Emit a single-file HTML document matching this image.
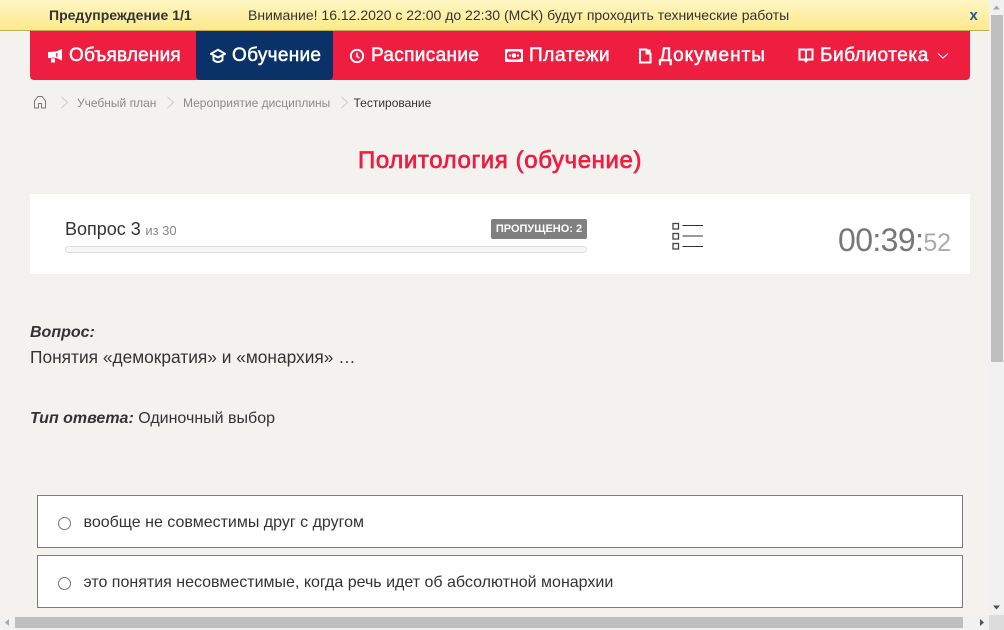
<!DOCTYPE html>
<html lang="ru"><head><meta charset="utf-8"><title>Тестирование</title>
<style>
html,body{margin:0;padding:0;width:1004px;height:630px;overflow:hidden;background:#f3f2ef;font-family:"Liberation Sans",sans-serif;color:#333}
.a{position:absolute;white-space:nowrap}
#bar{left:0;top:0;width:989px;height:30px;background:linear-gradient(#fff6c4,#fde98c);border-bottom:1px solid #c4ad50}
#nav{left:30px;top:31px;width:940px;height:49px;background:#ef1d40;border-radius:0 0 4px 4px}
#act{left:196px;top:31px;width:137px;height:49px;background:#0a3268;border-radius:0 0 4px 4px}
.n{top:43px;color:#fff;font-size:19px;line-height:26px;font-family:"Liberation Sans",sans-serif;-webkit-text-stroke:.5px #fff}
.i{position:absolute;top:47px;width:16px;height:16px}
.bc{top:96px;font-size:12px;line-height:14px;color:#8a8a8a}
.opt{left:37px;width:924px;height:51px;background:#fff;border:1px solid #7d7d7d}
.rad{position:absolute;left:58px;width:11px;height:11px;border:1px solid #767676;border-radius:50%;background:#fff}
.ot{left:83.500px;font-size:16px;line-height:20px;color:#333}
</style></head><body>
<div class="a" id="bar"></div>
<div class="a" style="left:49px;top:7px;font-size:14px;line-height:16px;font-weight:bold;color:#333">Предупреждение 1/1</div>
<div class="a" style="left:248px;top:7px;font-size:14px;line-height:16px;color:#333">Внимание! 16.12.2020 с 22:00 до 22:30 (МСК) будут проходить технические работы</div>
<div class="a" style="left:969.500px;top:8px;font-size:15px;line-height:16px;font-weight:bold;color:#1f5a94">x</div>

<div class="a" id="nav"></div><div class="a" id="act"></div>

<svg class="i" style="left:47px;top:48px" viewBox="0 0 16 16"><path d="M1 4 L9 3.500 L15 1 V12.500 L9.500 10 H8 V14.500 H4 V10 H1Z" fill="#fff"/><path d="M9.800 5 V8.800" stroke="#ef1d40" stroke-width="1.300" fill="none"/><path d="M4.500 10 H8" stroke="#ef1d40" stroke-width=".8" fill="none"/></svg>
<div class="a n" style="left:69px;letter-spacing:.2px">Объявления</div>

<svg class="i" style="left:210px;top:48px" viewBox="0 0 16 16"><path d="M8 1.800 L15 5.800 L8 9.500 L1 5.800Z" fill="none" stroke="#fff" stroke-width="2"/><path d="M3.500 8 V12 Q8 16 12.500 12 V8" fill="none" stroke="#fff" stroke-width="2"/></svg>
<div class="a n" style="left:232px;letter-spacing:.3px">Обучение</div>

<svg class="i" style="left:349px;top:48px" viewBox="0 0 16 16"><circle cx="8" cy="8" r="6.200" fill="none" stroke="#fff" stroke-width="1.900"/><path d="M8 4.500 V8.500 L10.500 10" fill="none" stroke="#fff" stroke-width="1.500"/></svg>
<div class="a n" style="left:371px;letter-spacing:.35px">Расписание</div>

<svg class="a" style="left:505px;top:49px" width="18" height="13" viewBox="0 0 18 13"><rect x="0" y="0" width="18" height="13" rx="1" fill="#fff"/><rect x="2" y="2.500" width="14" height="8" rx="2.500" fill="#ef1d40"/><circle cx="9" cy="6.500" r="2.300" fill="#fff"/><rect x="4" y="5.500" width="2" height="2" fill="#fff"/><rect x="12" y="5.500" width="2" height="2" fill="#fff"/></svg>
<div class="a n" style="left:529px;letter-spacing:.6px">Платежи</div>

<svg class="i" style="left:637px;top:48px" viewBox="0 0 16 16"><path d="M3 1.500 H9.500 L13.500 5.500 V14.500 H3Z" fill="none" stroke="#fff" stroke-width="2"/><path d="M8.500 1.500 V6.500 H13.500 V1.500Z" fill="#fff"/></svg>
<div class="a n" style="left:659px;letter-spacing:1px">Документы</div>

<svg class="i" style="left:798px;top:48px" viewBox="0 0 16 16"><path d="M1.500 1.500 H7 L8 2.500 L9 1.500 H14.500 V11.500 H9.500 L8 13.500 L6.500 11.500 H1.500Z M8 2.500 V13" fill="none" stroke="#fff" stroke-width="2"/></svg>
<div class="a n" style="left:820px;letter-spacing:.55px">Библиотека</div>
<svg class="a" style="left:937px;top:52px" width="12" height="8" viewBox="0 0 12 8"><path d="M1 1.500 L6 6 L11 1.500" fill="none" stroke="#fff" stroke-width="1.100"/></svg>

<svg class="a" style="left:33px;top:95px" width="14" height="14" viewBox="0 0 14 14"><path d="M1.500 6 L5 1.500 H9 L12.500 6 V13 H8.500 V8.500 H5.500 V13 H1.500Z" fill="none" stroke="#777" stroke-width="1"/></svg>
<svg class="a" style="left:60px;top:96px" width="9" height="13" viewBox="0 0 9 13"><path d="M1.500 1 L7.500 6.500 L1.500 12" fill="none" stroke="#ccc"/></svg>
<div class="a bc" style="left:77px">Учебный план</div>
<svg class="a" style="left:166px;top:96px" width="9" height="13" viewBox="0 0 9 13"><path d="M1.500 1 L7.500 6.500 L1.500 12" fill="none" stroke="#ccc"/></svg>
<div class="a bc" style="left:183px;letter-spacing:-.01px">Мероприятие дисциплины</div>
<svg class="a" style="left:340px;top:96px" width="9" height="13" viewBox="0 0 9 13"><path d="M1.500 1 L7.500 6.500 L1.500 12" fill="none" stroke="#ccc"/></svg>
<div class="a bc" style="left:353.500px;color:#333">Тестирование</div>

<div class="a" style="left:358px;top:146px;font-size:24px;line-height:30px;color:#ef1d40;letter-spacing:.6px;-webkit-text-stroke:.7px #ef1d40">Политология (обучение)</div>

<div class="a" style="left:30px;top:194px;width:940px;height:80px;background:#fff"></div>
<div class="a" style="left:65px;top:218px;font-size:18px;line-height:22px;color:#333">Вопрос 3 <span style="font-size:13px;color:#888;margin-left:-.5px">из 30</span></div>
<div class="a" style="left:65px;top:246px;width:520px;height:5px;border:1px solid #ddd;border-radius:4px;background:#f7f7f7"></div>
<div class="a" style="left:491px;top:219px;width:96px;height:20px;background:#808080;border-radius:2px;color:#fff;font-size:11px;font-weight:bold;line-height:20px;text-align:center">ПРОПУЩЕНО: 2</div>
<svg class="a" style="left:672px;top:222px" width="32" height="29" viewBox="0 0 32 29"><g fill="none" stroke="#444" stroke-width="1.300"><rect x="1" y="1.500" width="5.500" height="5.500"/><rect x="1" y="11.500" width="5.500" height="5.500"/><rect x="1" y="21.500" width="5.500" height="5.500"/></g><path d="M10.500 3.500H31M10.500 14H31M10.500 24.500H31" fill="none" stroke="#333" stroke-width="1"/></svg>
<div class="a" style="left:838px;top:221px;font-size:32px;line-height:38px;color:#777;letter-spacing:-.6px">00:39:<span style="font-size:25px;color:#aaa;letter-spacing:-.2px">52</span></div>

<div class="a" style="left:30px;top:323px;font-size:16px;line-height:20px;font-weight:bold;font-style:italic;color:#333">Вопрос:</div>
<div class="a" style="left:30px;top:347px;font-size:17.330px;line-height:20px;color:#333">Понятия «демократия» и «монархия» …</div>
<div class="a" style="left:30px;top:409px;font-size:16px;line-height:20px;color:#333"><b><i>Тип ответа:</i></b> Одиночный выбор</div>

<div class="a opt" style="top:495px"></div>
<div class="rad" style="top:517px"></div>
<div class="a ot" style="top:513px">вообще не совместимы друг с другом</div>
<div class="a opt" style="top:555px"></div>
<div class="rad" style="top:577px"></div>
<div class="a ot" style="top:573px">это понятия несовместимые, когда речь идет об абсолютной монархии</div>

<div class="a" style="left:989px;top:0;width:15px;height:615px;background:#f1f1f1"></div>
<div class="a" style="left:991px;top:15px;width:12px;height:347px;background:#bfbfbf"></div>
<svg class="a" style="left:989px;top:0" width="15" height="15"><path d="M4 9.500 L7.500 5.500 L11 9.500Z" fill="#a8a8a8"/></svg>
<svg class="a" style="left:989px;top:600px" width="15" height="15"><path d="M4 5.500 L7.500 9.500 L11 5.500Z" fill="#505050"/></svg>
<div class="a" style="left:0;top:615px;width:989px;height:15px;background:#f1f1f1"></div>
<div class="a" style="left:15px;top:617px;width:948px;height:11px;background:#bfbfbf"></div>
<svg class="a" style="left:0;top:615px" width="15" height="15"><path d="M9 4 L5 7.500 L9 11Z" fill="#a8a8a8"/></svg>
<svg class="a" style="left:974px;top:615px" width="15" height="15"><path d="M6 4 L10 7.500 L6 11Z" fill="#505050"/></svg>
<div class="a" style="left:989px;top:615px;width:15px;height:15px;background:#dcdcdc"></div>
</body></html>
